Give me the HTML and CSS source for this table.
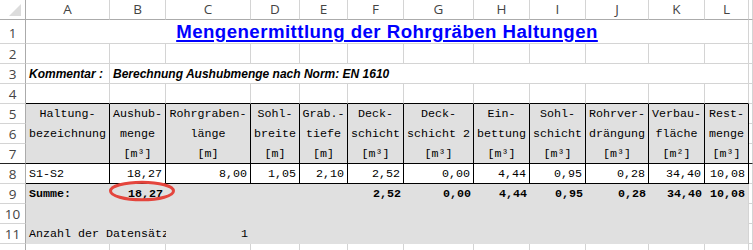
FILE: index.html
```html
<!DOCTYPE html>
<html>
<head>
<meta charset="utf-8">
<link rel="stylesheet" href="styles.css">
</head>
<body>
<div class="sheet">
  <div class="corner"><svg class="tri" width="14" height="14" viewBox="0 0 14 14"><polygon points="13,1 13,13 1,13" fill="#dcdcdc"/></svg></div>
  <div class="ch">A</div><div class="ch">B</div><div class="ch">C</div><div class="ch">D</div><div class="ch">E</div><div class="ch">F</div><div class="ch">G</div><div class="ch">H</div><div class="ch">I</div><div class="ch">J</div><div class="ch">K</div><div class="ch">L</div><div class="ch"></div>

  <div class="rh tall">1</div>
  <div class="c title"><span>Mengenermittlung der Rohrgräben Haltungen</span></div>
  <div class="c"></div>

  <div class="rh">2</div>
  <div class="c"></div><div class="c"></div><div class="c"></div><div class="c"></div><div class="c"></div><div class="c"></div><div class="c"></div><div class="c"></div><div class="c"></div><div class="c"></div><div class="c"></div><div class="c"></div><div class="c"></div>

  <div class="rh">3</div>
  <div class="c it">Kommentar :</div>
  <div class="c it wide">Berechnung Aushubmenge nach Norm: EN 1610</div>
  <div class="c"></div>

  <div class="rh">4</div>
  <div class="c bb"></div><div class="c bb"></div><div class="c bb"></div><div class="c bb"></div><div class="c bb"></div><div class="c bb"></div><div class="c bb"></div><div class="c bb"></div><div class="c bb"></div><div class="c bb"></div><div class="c bb"></div><div class="c bb"></div><div class="c"></div>

  <div class="rh">5</div>
  <div class="hd"><div>Haltung-</div><div>bezeichnung</div><div></div></div>
  <div class="hd"><div>Aushub-</div><div>menge</div><div>[m³]</div></div>
  <div class="hd"><div>Rohrgraben-</div><div>länge</div><div>[m]</div></div>
  <div class="hd"><div>Sohl-</div><div>breite</div><div>[m]</div></div>
  <div class="hd"><div>Grab.-</div><div>tiefe</div><div>[m]</div></div>
  <div class="hd"><div>Deck-</div><div>schicht</div><div>[m³]</div></div>
  <div class="hd"><div>Deck-</div><div>schicht 2</div><div>[m³]</div></div>
  <div class="hd"><div>Ein-</div><div>bettung</div><div>[m³]</div></div>
  <div class="hd"><div>Sohl-</div><div>schicht</div><div>[m³]</div></div>
  <div class="hd"><div>Rohrver-</div><div>drängung</div><div>[m³]</div></div>
  <div class="hd"><div>Verbau-</div><div>fläche</div><div>[m²]</div></div>
  <div class="hd"><div>Rest-</div><div>menge</div><div>[m³]</div></div>
  <div class="c"></div>
  <div class="rh">6</div><div class="c"></div>
  <div class="rh fz">7</div><div class="c fz"></div>

  <div class="rh">8</div>
  <div class="d">S1-S2</div>
  <div class="d n">18,27</div><div class="d n">8,00</div><div class="d n">1,05</div><div class="d n">2,10</div><div class="d n">2,52</div><div class="d n">0,00</div><div class="d n">4,44</div><div class="d n">0,95</div><div class="d n">0,28</div><div class="d n">34,40</div><div class="d n">10,08</div>
  <div class="c"></div>

  <div class="rh">9</div>
  <div class="g b">Summe:</div>
  <div class="g b n">18,27</div><div class="g"></div><div class="g"></div><div class="g"></div><div class="g b n">2,52</div><div class="g b n">0,00</div><div class="g b n">4,44</div><div class="g b n">0,95</div><div class="g b n">0,28</div><div class="g b n">34,40</div><div class="g b n last">10,08</div>
  <div class="c"></div>

  <div class="rh">10</div>
  <div class="g"></div><div class="g"></div><div class="g"></div><div class="g"></div><div class="g"></div><div class="g"></div><div class="g"></div><div class="g"></div><div class="g"></div><div class="g"></div><div class="g"></div><div class="g last"></div>
  <div class="c"></div>

  <div class="rh">11</div>
  <div class="g two">Anzahl der Datensätze:</div>
  <div class="g n">1</div><div class="g"></div><div class="g"></div><div class="g"></div><div class="g"></div><div class="g"></div><div class="g"></div><div class="g"></div><div class="g"></div><div class="g last"></div>
  <div class="c"></div>

  <div class="rh"></div>
  <div class="c"></div><div class="c"></div><div class="c"></div><div class="c"></div><div class="c"></div><div class="c"></div><div class="c"></div><div class="c"></div><div class="c"></div><div class="c"></div><div class="c"></div><div class="c"></div><div class="c"></div>
</div>
<svg class="mark" width="72" height="26" viewBox="0 0 72 26"><ellipse cx="35" cy="13" rx="31.5" ry="8.8" fill="none" stroke="#e4453d" stroke-width="3"/></svg>
</body>
</html>
```

FILE: styles.css
```css
html, body {
  margin: 0;
  background: #ffffff;
}

body {
  position: relative;
  width: 753px;
  height: 250px;
  overflow: hidden;
}

.sheet {
  display: grid;
  grid-template-columns: 26px 84px 56px 85px 49px 48px 56px 70px 56px 56px 63px 56px 44px 1fr;
  grid-template-rows: 20px 24px repeat(11, 20px) 6px;
  width: 753px;
  height: 250px;
  overflow: hidden;
  font-family: "Liberation Mono", "Courier New", monospace;
  font-size: 11.67px;
  color: #000;
}

.sheet > div {
  box-sizing: border-box;
  min-width: 0;
  white-space: nowrap;
}

.corner {
  border-right: 1px solid #ababab;
  border-bottom: 1px solid #ababab;
  display: flex;
  align-items: flex-end;
  justify-content: flex-end;
  padding: 0 3px 2px 0;
}

.tri {
  display: block;
}

.ch {
  border-right: 1px solid #d4d4d4;
  border-bottom: 1px solid #ababab;
  text-align: center;
  font-family: "Open Sans", "Liberation Sans", sans-serif;
  font-size: 13.5px;
  line-height: 19px;
  color: #444;
}

.rh {
  border-right: 1px solid #ababab;
  border-bottom: 1px solid #d4d4d4;
  text-align: center;
  font-family: "Open Sans", "Liberation Sans", sans-serif;
  font-size: 13.5px;
  line-height: 21px;
  color: #444;
  overflow: hidden;
}

.rh.tall {
  line-height: 26px;
}

.c {
  border-right: 1px solid #d4d4d4;
  border-bottom: 1px solid #d4d4d4;
}

.fz {
  border-bottom-color: #222 !important;
}

.title {
  grid-column: span 12;
  text-align: center;
  font-family: "Liberation Sans", Arial, sans-serif;
  font-weight: bold;
  font-size: 18.67px;
  letter-spacing: 0.45px;
  line-height: 24px;
  color: #0000ff;
}

.title span {
  text-decoration: underline;
  text-underline-offset: 2px;
  text-decoration-thickness: 2px;
}

.it {
  font-family: "Liberation Sans", Arial, sans-serif;
  font-weight: bold;
  font-style: italic;
  font-size: 12px;
  line-height: 21px;
  padding-left: 3px;
}

.wide {
  grid-column: span 11;
}

.bb {
  border-bottom-color: #000;
}

.hd {
  grid-row: span 3;
  background: #e0e0e0;
  border-right: 1px solid #000;
  border-bottom: 1px solid #000;
  text-align: center;
}

.hd > div {
  height: 20px;
  line-height: 21px;
}

.d {
  border-right: 1px solid #000;
  border-bottom: 1px solid #000;
  line-height: 20px;
  padding: 0 3px;
}

.n {
  text-align: right;
}

.g {
  background: #e0e0e0;
  line-height: 20px;
  padding: 0 3px;
  overflow: hidden;
}

.g.last {
  border-right: 1px solid #d4d4d4;
}

.b {
  font-weight: bold;
}

.two {
  grid-column: span 2;
}

.mark {
  position: absolute;
  left: 107px;
  top: 178px;
  pointer-events: none;
}
```
